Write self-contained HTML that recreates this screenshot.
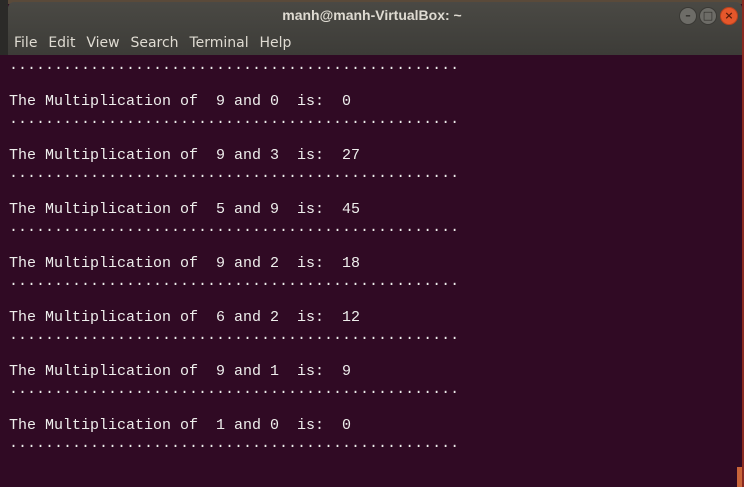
<!DOCTYPE html>
<html><head><meta charset="utf-8"><style>
html,body{margin:0;padding:0;width:744px;height:487px;overflow:hidden;background:#300a24;}
.desk{position:absolute;left:0;top:0;width:744px;height:4px;background:#5a4a3a;}
.lstrip{position:absolute;left:0;top:0;width:8px;height:55px;background:#2b2a28;}
.title{position:absolute;left:8px;top:2px;width:734px;height:53px;background:linear-gradient(#4a4944,#3d3c38);border-radius:6px 6px 0 0;}
.rstrip{position:absolute;right:0;top:0;width:2px;height:487px;background:#8a2a20;}
.t{position:absolute;left:0;width:744px;top:7px;text-align:center;color:#dfdbd2;font:bold 14px "Liberation Sans",sans-serif;}
.menu{position:absolute;left:14px;top:35px;color:#dfdbd2;font:14px "DejaVu Sans","Liberation Sans",sans-serif;word-spacing:1px;}
.btn{position:absolute;top:7px;width:16px;height:16px;border-radius:50%;background:#6d6c67;border:1px solid #3a3935;color:#2e2d2a;font:bold 11px "DejaVu Sans",sans-serif;text-align:center;line-height:16px;}
.term{position:absolute;left:9px;top:57px;margin:0;color:#eeeeec;font:15px/18px "Liberation Mono","DejaVu Sans Mono",monospace;white-space:pre;}
.sb{position:absolute;left:737px;top:467px;width:5px;height:20px;background:#c8643a;}
</style></head><body>
<div class="desk"></div><div class="lstrip"></div>
<div class="title"></div>
<div class="t">manh@manh-VirtualBox: ~</div>
<div class="menu">File&nbsp; Edit&nbsp; View&nbsp; Search&nbsp; Terminal&nbsp; Help</div>
<div class="btn" style="left:679px">–</div>
<div class="btn" style="left:699px">□</div>
<div class="btn" style="left:720px;background:#e5572b;border-color:#b9431f;color:#5a1c0a">×</div>
<pre class="term">..................................................

The Multiplication of  9 and 0  is:  0
..................................................

The Multiplication of  9 and 3  is:  27
..................................................

The Multiplication of  5 and 9  is:  45
..................................................

The Multiplication of  9 and 2  is:  18
..................................................

The Multiplication of  6 and 2  is:  12
..................................................

The Multiplication of  9 and 1  is:  9
..................................................

The Multiplication of  1 and 0  is:  0
..................................................</pre>
<div class="rstrip"></div>
<div class="sb"></div>
</body></html>
